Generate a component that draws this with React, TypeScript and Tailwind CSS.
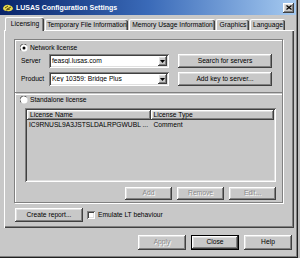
import React from "react";

const raised =
  "shadow-[inset_-1px_-1px_#404040,inset_1px_1px_#ffffff,inset_-2px_-2px_#808080,inset_2px_2px_#e0e0e0]";
const sunken =
  "shadow-[inset_1px_1px_#808080,inset_-1px_-1px_#ffffff,inset_2px_2px_#404040,inset_-2px_-2px_#e0e0e0]";
const disabledText = "text-[#8a8a8a] [text-shadow:1px_1px_0_#ffffff]";

function Radio({ on }: { on?: boolean }) {
  return (
    <svg width="8" height="8" viewBox="0 0 8 8" className="shrink-0">
      <circle cx="4" cy="4" r="3.5" fill="#ffffff" />
      <path d="M1 6.5 A3.5 3.5 0 0 1 6.5 1" stroke="#606060" strokeWidth="1" fill="none" />
      {on && <circle cx="4" cy="4" r="1.5" fill="#000000" />}
    </svg>
  );
}

function Combo({ text }: { text: string }) {
  return (
    <div className={`w-[120px] h-[14px] bg-white ${sunken} flex items-center pl-[3px] pr-[2px]`}>
      <span className="flex-1 whitespace-nowrap overflow-hidden">{text}</span>
      <div className={`w-[9px] h-[10px] bg-[#c8c8c8] ${raised} flex items-center justify-center`}>
        <svg width="5" height="3" viewBox="0 0 5 3">
          <path d="M0 0 H5 L2.5 3 Z" fill="#000" />
        </svg>
      </div>
    </div>
  );
}

export default function App() {
  return (
    <div className="w-[300px] h-[258px] bg-[#bdbdbd] overflow-hidden font-['Liberation_Sans',Arial,sans-serif] text-[6.7px] leading-none text-black">
      <div className="w-[298px] h-[258px] bg-[#c8c8c8] shadow-[inset_-1px_-1px_#202020,inset_-2px_-2px_#808080] flex flex-col">
        {/* Title bar */}
        <div className="h-[15px] mr-[2px] bg-gradient-to-r from-[#0a246a] via-[#3a6ab8] to-[#a6caf0] flex items-center pl-[2px] pr-[2px]">
          <svg width="12" height="10" viewBox="0 0 12 10" className="shrink-0">
            <path d="M1 5 Q3 1 7 2 Q11 3 11 6 Q9 9 5 8 Q1 8 1 5 Z" fill="#e8d84a" />
            <path d="M3 5 L6 3 M5 6 L9 4 M4 7 L8 6" stroke="#5a4a10" strokeWidth="1" />
          </svg>
          <span className="ml-[2px] font-bold text-white text-[7px]">LUSAS Configuration Settings</span>
          <div className={`ml-auto w-[11px] h-[10px] bg-[#c8c8c8] ${raised} flex items-center justify-center`}>
            <svg width="6" height="5" viewBox="0 0 6 5">
              <path d="M0.5 0.5 L5.5 4.5 M5.5 0.5 L0.5 4.5" stroke="#000" strokeWidth="1.2" />
            </svg>
          </div>
        </div>

        {/* Tabs */}
        <div className="mt-[2px] h-[13px] ml-[5px] flex items-end relative z-10">
          <div className="w-[39px] h-[14px] -mb-[1px] bg-[#c8c8c8] border-t border-l border-white shadow-[inset_-1px_0_#404040,inset_-2px_0_#808080] rounded-t-[2px] flex items-center justify-center">
            Licensing
          </div>
          {[
            ["Temporary File Information", "w-[83px]"],
            ["Memory Usage Information", "w-[86px]"],
            ["Graphics", "w-[33px]"],
            ["Language", "w-[35px]"],
          ].map(([t, w]) => (
            <div
              key={t}
              className={`${w} h-[11px] ml-[1px] border-t border-l border-white shadow-[inset_-1px_0_#404040,inset_-2px_0_#808080] rounded-t-[2px] flex items-center justify-center whitespace-nowrap`}
            >
              {t}
            </div>
          ))}
        </div>

        {/* Tab panel */}
        <div className="ml-[4px] w-[290px] h-[198px] shadow-[inset_1px_1px_#ffffff,inset_-1px_-1px_#404040,inset_-2px_-2px_#808080] pt-[9px] pl-[10px]">
          {/* Etched frame */}
          <div className="w-[269px] h-[164px] border border-[#808080] shadow-[inset_1px_1px_#ffffff,1px_1px_#ffffff]">
            {/* Network section */}
            <div className="h-[52px] pt-[4px] pl-[5px]">
              <div className="h-[8px] flex items-center gap-[2px]">
                <Radio on />
                <span>Network license</span>
              </div>
              <div className="mt-[2px] h-[14px] flex items-center">
                <span className="w-[29px] pl-[1px]">Server</span>
                <Combo text="feasql.lusas.com" />
                <div className={`ml-[9px] w-[94px] h-[14px] ${raised} flex items-center justify-center`}>
                  Search for servers
                </div>
              </div>
              <div className="mt-[4px] h-[14px] flex items-center">
                <span className="w-[29px] pl-[1px]">Product</span>
                <Combo text="Key 10359: Bridge Plus" />
                <div className={`ml-[9px] w-[94px] h-[14px] ${raised} flex items-center justify-center`}>
                  Add key to server...
                </div>
              </div>
            </div>
            <div className="h-[2px] border-t border-[#808080] border-b-0 shadow-[0_1px_#ffffff]" />
            {/* Standalone section */}
            <div className="pl-[5px]">
              <div className="mt-[2px] h-[8px] flex items-center gap-[2px]">
                <Radio />
                <span>Standalone license</span>
              </div>
              <div className={`mt-[4px] ml-[5px] w-[251px] h-[74px] ${sunken} p-[2px]`}>
                <div className="flex h-[10px]">
                  <div className={`w-[124px] ${raised} flex items-center pl-[3px]`}>License Name</div>
                  <div className={`w-[124px] ${raised} flex items-center pl-[3px]`}>License Type</div>
                </div>
                <div className="flex h-[9px] items-center mt-[1px]">
                  <div className="w-[124px] pl-[2px] whitespace-nowrap overflow-hidden">IC9RNUSL9A3JSTSLDALRPGWUBL ...</div>
                  <div className="w-[124px] pl-[3px]">Comment</div>
                </div>
              </div>
              <div className="mt-[5px] ml-[5px] w-[251px] flex justify-end gap-[5px]">
                {["Add", "Remove", "Edit..."].map((t) => (
                  <div key={t} className={`w-[47px] h-[13px] ${raised} flex items-center justify-center ${disabledText}`}>
                    {t}
                  </div>
                ))}
              </div>
            </div>
          </div>
          {/* Bottom row inside panel */}
          <div className="mt-[5px] ml-[1px] h-[14px] flex items-center">
            <div className={`w-[68px] h-[14px] ${raised} flex items-center justify-center`}>Create report...</div>
            <div className={`ml-[4px] w-[8px] h-[8px] bg-white ${sunken}`} />
            <span className="ml-[3px]">Emulate LT behaviour</span>
          </div>
        </div>

        {/* Dialog buttons */}
        <div className="mt-[7px] flex pl-[138px] gap-[5px]">
          <div className={`w-[48px] h-[15px] ${raised} flex items-center justify-center ${disabledText}`}>Apply</div>
          <div className="w-[48px] h-[15px] border border-black">
            <div className={`w-full h-full ${raised} flex items-center justify-center`}>Close</div>
          </div>
          <div className={`w-[48px] h-[15px] ${raised} flex items-center justify-center`}>Help</div>
        </div>
      </div>
    </div>
  );
}
